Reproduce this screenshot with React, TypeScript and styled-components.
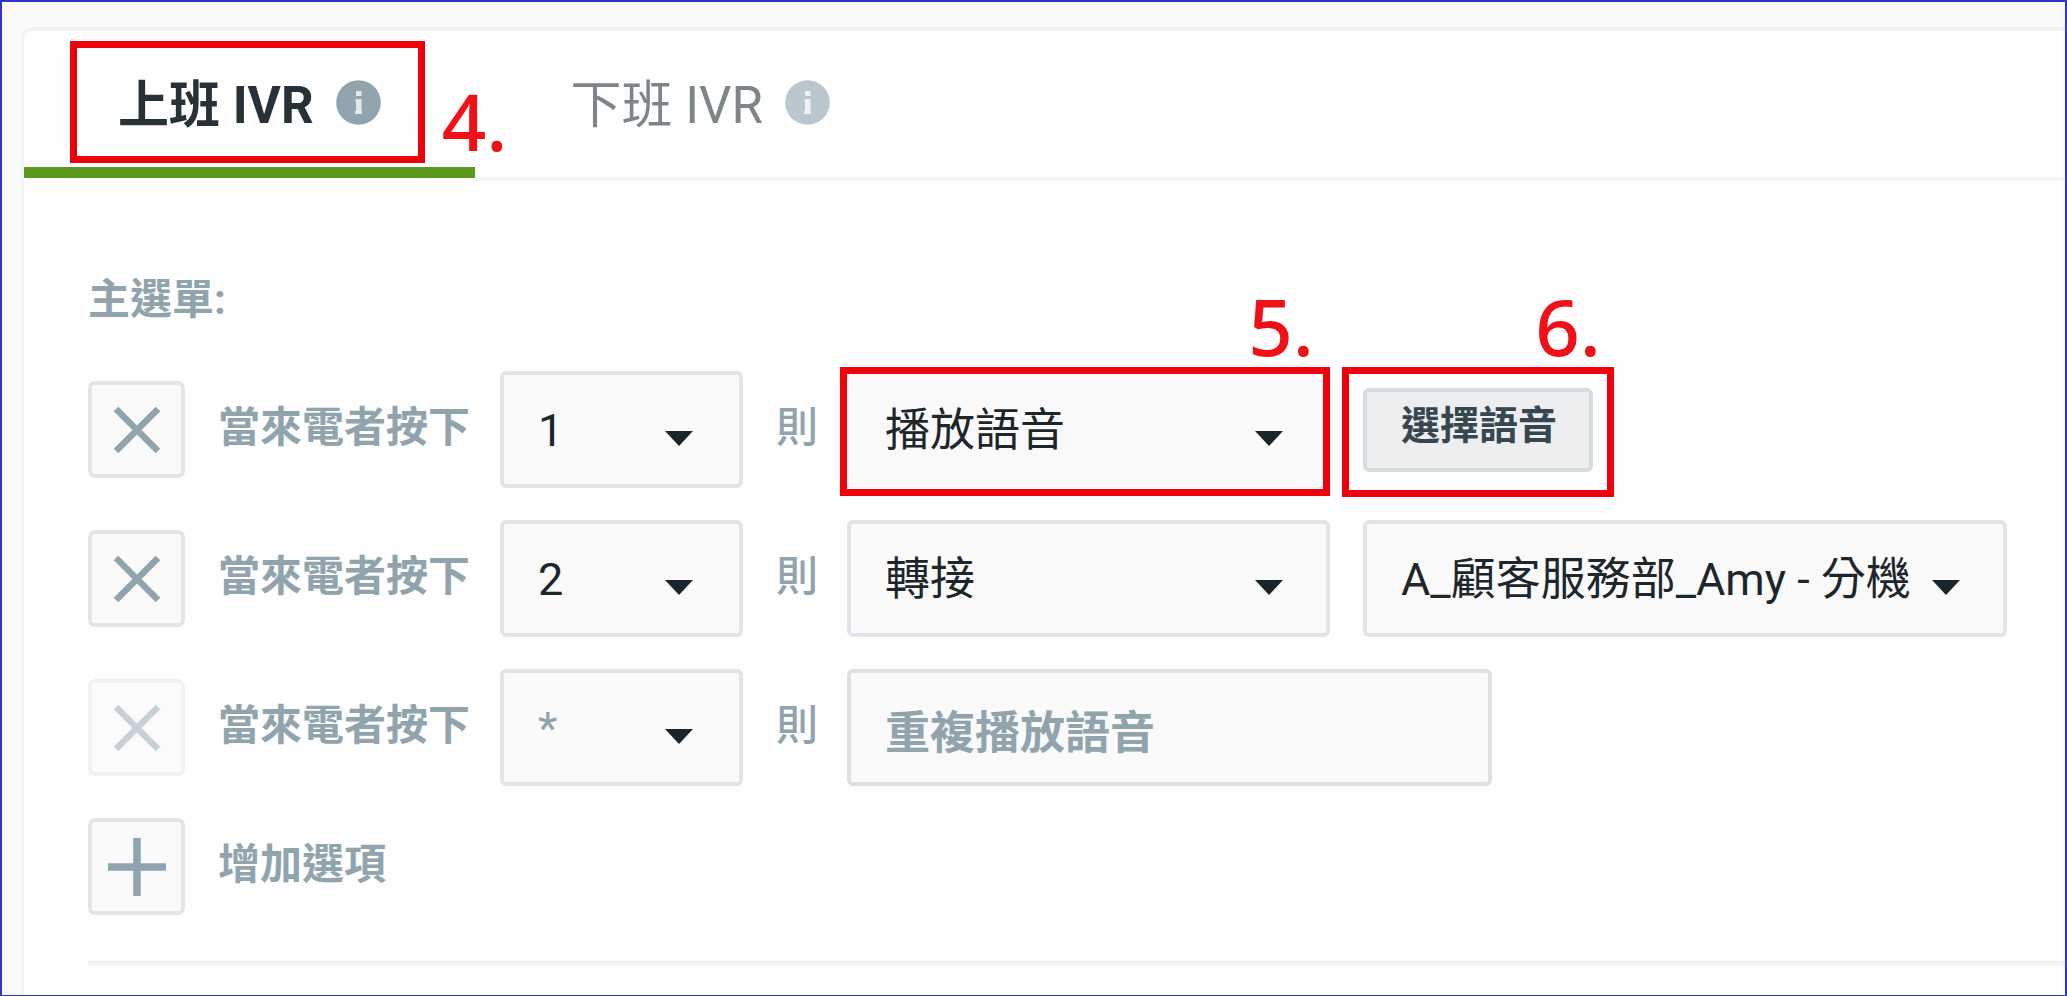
import React from "react";
import styled, { createGlobalStyle } from "styled-components";

const FONT = `Roboto, "Noto Sans CJK TC", sans-serif`;

const GlobalStyle = createGlobalStyle`
  *, *::before, *::after { box-sizing: border-box; }
  body { margin: 0; background: #fafafa; font-family: ${FONT}; }
  button, input, select { font-family: inherit; margin: 0; }
`;

const Page = styled.div`
  display: flex;
  min-height: 100vh;
  padding: 25px 0 0 19px;
  border: 2px solid #3434c8;
  overflow-x: hidden;
`;

const Card = styled.main`
  flex: 1;
  min-width: 0;
  background: #fefefe;
  border-top: 4px solid #f0f2f4;
  border-left: 3px solid #f0f2f4;
  border-top-left-radius: 12px;
`;

const TabBar = styled.div`
  display: flex;
  height: 150px;
  box-shadow: inset 0 -4px #f2f4f6;
`;

const TabButton = styled.button<{ $active?: boolean }>`
  position: relative;
  display: flex;
  align-items: center;
  gap: 22px;
  padding: 0 94px 8px ${(p) => (p.$active ? 94 : 96)}px;
  border: 0;
  border-top-left-radius: 8px;
  background: ${(p) => (p.$active ? "#fefefe" : "transparent")};
  color: ${(p) => (p.$active ? "#263238" : "#7d8589")};
  font-size: 51px;
  line-height: 60px;
  font-weight: ${(p) => (p.$active ? 700 : 400)};
  white-space: nowrap;
  cursor: pointer;

  &::after {
    content: "";
    display: ${(p) => (p.$active ? "block" : "none")};
    position: absolute;
    left: 0;
    right: 0;
    bottom: 3px;
    height: 11px;
    background: #5b9a1f;
  }
`;

const TabLabel = styled.span`
  padding-top: 8px;
`;

const Callout = styled.span<{ $inset: string }>`
  position: absolute;
  inset: ${(p) => p.$inset};
  border: 7px solid #f0000a;
  pointer-events: none;
`;

const StepNumber = styled.span<{ $right: number; $top: number }>`
  position: absolute;
  right: ${(p) => p.$right}px;
  top: ${(p) => p.$top}px;
  color: #f01018;
  font-family: "Noto Sans", sans-serif;
  font-size: 78px;
  line-height: 80px;
  font-weight: 500;
  pointer-events: none;
`;

const Body = styled.section`
  padding: 89px 0 30px 64px;
`;

const Title = styled.h2`
  margin: 0 0 41px;
  color: #90a4ae;
  font-size: 42px;
  line-height: 60px;
  font-weight: 700;
`;

const Rows = styled.div`
  display: flex;
  flex-direction: column;
  gap: 32px;
`;

const Row = styled.div`
  display: grid;
  grid-template-columns: 130px 282px 243px 104px 483px auto;
  justify-content: start;
  align-items: center;
`;

const IconButton = styled.button`
  display: flex;
  align-items: center;
  justify-content: center;
  width: 97px;
  height: 97px;
  padding: 0;
  border: 4px solid #e1e6ea;
  border-radius: 7px;
  background: #fafafa;
  color: #90a4ae;
  cursor: pointer;

  &:disabled { opacity: 0.5; cursor: default; }
`;

const RowText = styled.label`
  padding-bottom: 4px;
  color: #90a4ae;
  font-size: 42px;
  line-height: 60px;
  font-weight: 700;
  white-space: nowrap;
`;

const Connector = styled(RowText)`
  padding-left: 33px;
  font-weight: 500;
`;

const Field = styled.div<{ $wide?: boolean }>`
  position: relative;
  display: flex;
  width: ${(p) => (p.$wide ? "644px" : "auto")};
`;

const Target = styled(Field)`
  margin-left: 33px;
`;

const Select = styled.select<{ $bare?: boolean }>`
  appearance: none;
  width: 100%;
  height: 117px;
  padding: 2px 80px 0 34px;
  border: 4px solid ${(p) => (p.$bare ? "#fafafa" : "#dfe5e8")};
  border-radius: 6px;
  background: #fafafa;
  color: #1c262b;
  font-size: 45px;
  line-height: 60px;

  &:disabled { color: #90a4ae; opacity: 1; }
`;

const Arrow = styled.svg<{ $right: number }>`
  position: absolute;
  right: ${(p) => p.$right}px;
  top: 60px;
  width: 28px;
  height: 15px;
  fill: #18262c;
  pointer-events: none;
`;

const ReadOnly = styled.input`
  width: 645px;
  height: 117px;
  padding: 4px 34px 0;
  border: 4px solid #e0e0e0;
  border-radius: 6px;
  background: #fafafa;
  color: #90a4ae;
  font-size: 45px;
  font-weight: 700;
`;

const PickButton = styled.button`
  height: 84px;
  padding: 0 32px 8px 34px;
  border: 4px solid #d6dde1;
  border-radius: 6px;
  background: #eceef0;
  color: #37474f;
  font-size: 39px;
  line-height: 50px;
  font-weight: 700;
  white-space: nowrap;
  cursor: pointer;
`;

const Divider = styled.hr`
  height: 4px;
  margin: 46px 0 0;
  border: 0;
  background: #f1f3f5;
`;

const InfoIcon = ({ color }: { color: string }) => (
  <svg width="45" height="45" viewBox="0 0 45 45" aria-hidden="true">
    <circle cx="22.5" cy="22.5" r="22.3" fill={color} />
    <path
      d="M20 11h5.500v5h-5.500zM19.500 19h6v12H26V34H19v-3h1v-9h-.5z"
      fill="#fff"
      opacity=".75"
    />
  </svg>
);

const CrossIcon = () => (
  <svg width="48" height="48" viewBox="0 0 48 48" aria-hidden="true">
    <path d="M3 3L45 45M45 3L3 45" stroke="currentColor" strokeWidth="6.500" />
  </svg>
);

const PlusIcon = () => (
  <svg width="60" height="60" viewBox="0 0 60 60" aria-hidden="true">
    <path d="M30 1V59M1 30H59" stroke="currentColor" strokeWidth="7.500" />
  </svg>
);

const Caret = ({ right = 47 }: { right?: number }) => (
  <Arrow $right={right} viewBox="0 0 28 15" aria-hidden="true">
    <path d="M0 0H28L14 15Z" />
  </Arrow>
);

type KeySelectProps = { id: string; value: string; disabled?: boolean };

const KeySelect = ({ id, value, disabled }: KeySelectProps) => (
  <Field>
    <Select id={id} defaultValue={value} disabled={disabled}>
      <option>{value}</option>
    </Select>
    <Caret right={50} />
  </Field>
);

export default function App() {
  return (
    <>
      <GlobalStyle />
      <Page>
        <Card>
          <TabBar role="tablist">
            <TabButton role="tab" aria-selected="true" $active>
              <TabLabel>上班 IVR</TabLabel>
              <InfoIcon color="#90a4ae" />
              <Callout $inset="10px 50px 18px 46px" />
              <StepNumber $right={-33} $top={50}>4.</StepNumber>
            </TabButton>
            <TabButton role="tab" aria-selected="false">
              <TabLabel>下班 IVR</TabLabel>
              <InfoIcon color="#bac7ce" />
            </TabButton>
          </TabBar>
          <Body>
            <Title>主選單:</Title>
            <Rows>
              <Row>
                <IconButton aria-label="刪除"><CrossIcon /></IconButton>
                <RowText htmlFor="key-1">當來電者按下</RowText>
                <KeySelect id="key-1" value="1" />
                <Connector htmlFor="action-1">則</Connector>
                <Field>
                  <Select id="action-1" defaultValue="播放語音" $bare>
                    <option>播放語音</option>
                    <option>轉接</option>
                  </Select>
                  <Caret />
                  <Callout $inset="-4px 0 -8px -7px" />
                  <StepNumber $right={16} $top={-85}>5.</StepNumber>
                </Field>
                <Target>
                  <PickButton>選擇語音</PickButton>
                  <Callout $inset="-21px -21px -25px" />
                  <StepNumber $right={-8} $top={-102}>6.</StepNumber>
                </Target>
              </Row>
              <Row>
                <IconButton aria-label="刪除"><CrossIcon /></IconButton>
                <RowText htmlFor="key-2">當來電者按下</RowText>
                <KeySelect id="key-2" value="2" />
                <Connector htmlFor="action-2">則</Connector>
                <Field>
                  <Select id="action-2" defaultValue="轉接">
                    <option>播放語音</option>
                    <option>轉接</option>
                  </Select>
                  <Caret />
                </Field>
                <Target $wide>
                  <Select aria-label="分機">
                    <option>A_顧客服務部_Amy - 分機 2</option>
                  </Select>
                  <Caret />
                </Target>
              </Row>
              <Row>
                <IconButton aria-label="刪除" disabled><CrossIcon /></IconButton>
                <RowText htmlFor="key-3">當來電者按下</RowText>
                <KeySelect id="key-3" value="*" disabled />
                <Connector htmlFor="action-3">則</Connector>
                <ReadOnly id="action-3" readOnly value="重複播放語音" />
              </Row>
              <Row>
                <IconButton id="add-option"><PlusIcon /></IconButton>
                <RowText htmlFor="add-option">增加選項</RowText>
              </Row>
            </Rows>
            <Divider />
          </Body>
        </Card>
      </Page>
    </>
  );
}
